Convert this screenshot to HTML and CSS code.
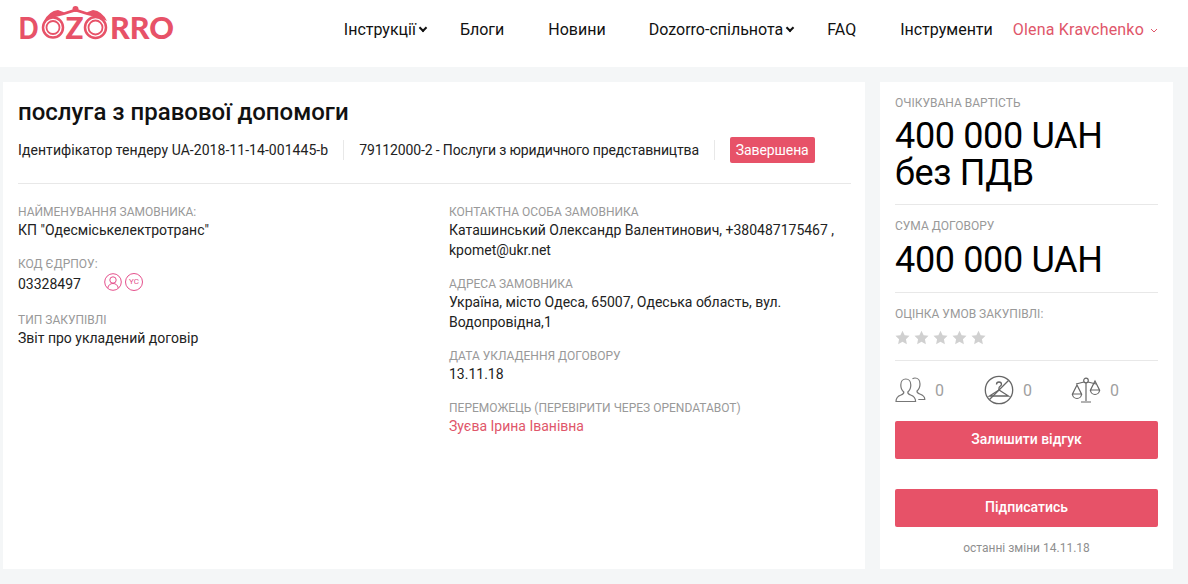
FILE: index.html
```html
<!DOCTYPE html>
<html lang="uk">
<head>
<meta charset="utf-8">
<title>Dozorro</title>
<link rel="stylesheet" href="styles.css">
</head>
<body>
<header class="header">
  <a class="logo" href="#" aria-label="Dozorro">
    <svg width="156" height="46" viewBox="0 -3 156 46">
      <g fill="#e75268" font-family="Lato, sans-serif" font-weight="900" font-size="31">
        <text x="-1.500" y="30.500" textLength="20" lengthAdjust="spacingAndGlyphs">D</text>
        <text x="45.500" y="30.500" textLength="18" lengthAdjust="spacingAndGlyphs">Z</text>
        <text x="90" y="30.500" textLength="64" lengthAdjust="spacingAndGlyphs">RRO</text>
      </g>
      <path d="M24 13Q29 3 38 2L44 4.200 55.500 .5 67 4.200 73 2Q82 3 87 13L80 10 67 7 55.500 3.500 44 7 31 10Z" fill="#e75268"/>
      <g fill="#fff" stroke="#e75268">
        <circle cx="33" cy="19.500" r="10" stroke-width="2.500"/>
        <circle cx="33" cy="19.500" r="6.500" stroke-width="1.800"/>
        <circle cx="75.500" cy="19.500" r="10.500" stroke-width="2.500"/>
        <circle cx="75.500" cy="19.500" r="7" stroke-width="1.800"/>
      </g>
      <circle cx="55.500" cy="1" r="3" fill="#e75268"/>
    </svg>
  </a>
  <nav class="nav">
    <a class="nav-link has-caret" href="#">Інструкції</a>
    <a class="nav-link" href="#">Блоги</a>
    <a class="nav-link" href="#">Новини</a>
    <a class="nav-link has-caret" href="#">Dozorro-спільнота</a>
    <a class="nav-link" href="#">FAQ</a>
    <a class="nav-link" href="#">Інструменти</a>
    <a class="user" href="#">Olena Kravchenko
      <svg class="user-caret" width="8" height="5" viewBox="0 0 8 5"><path d="M1 1l3 3 3-3" fill="none" stroke="#e0566a"/></svg>
    </a>
  </nav>
</header>

<main class="page">
  <section class="card main-card">
    <h1 class="title">послуга з правової допомоги</h1>
    <div class="meta">
      <span class="meta-item meta-id">Ідентифікатор тендеру UA-2018-11-14-001445-b</span>
      <span class="meta-item meta-cpv">79112000-2 - Послуги з юридичного представництва</span>
      <span class="meta-item meta-status"><span class="status">Завершена</span></span>
    </div>
    <div class="columns">
      <div class="col col-left">
        <div class="field">
          <div class="label">Найменування замовника:</div>
          <div class="value">КП "Одесміськелектротранс"</div>
        </div>
        <div class="field">
          <div class="label">Код ЄДРПОУ:</div>
          <div class="value code-row">
            <span>03328497</span>
            <span class="badges">
              <svg width="18" height="18" viewBox="0 0 18 18" fill="none" stroke="#e5508c">
                <circle cx="9" cy="9" r="8.300"/>
                <circle cx="9" cy="7" r="3.200"/>
                <path d="M3.800 15c.5-3 2.500-4.500 5.200-4.500s4.700 1.500 5.200 4.500"/>
              </svg>
              <span class="badge-yc">YC</span>
            </span>
          </div>
        </div>
        <div class="field">
          <div class="label">Тип закупівлі</div>
          <div class="value">Звіт про укладений договір</div>
        </div>
      </div>
      <div class="col col-right">
        <div class="field">
          <div class="label">Контактна особа замовника</div>
          <div class="value">Каташинський Олександр Валентинович, +380487175467 , kpomet@ukr.net</div>
        </div>
        <div class="field">
          <div class="label">Адреса замовника</div>
          <div class="value">Україна, місто Одеса, 65007, Одеська область, вул. Водопровідна,1</div>
        </div>
        <div class="field">
          <div class="label">Дата укладення договору</div>
          <div class="value">13.11.18</div>
        </div>
        <div class="field">
          <div class="label">Переможець (перевірити через opendatabot)</div>
          <div class="value"><a class="winner" href="#">Зуєва Ірина Іванівна</a></div>
        </div>
      </div>
    </div>
  </section>

  <aside class="card side-card">
    <div class="side-block block-expected">
      <div class="label">Очікувана вартість</div>
      <div class="price">400 000 UAH<br>без ПДВ</div>
    </div>
    <div class="side-block block-sum">
      <div class="label">Сума договору</div>
      <div class="price">400 000 UAH</div>
    </div>
    <div class="side-block block-rating">
      <div class="label">Оцінка умов закупівлі:</div>
      <div class="stars" aria-hidden="true">
        <svg width="15" height="15" viewBox="0 0 24 24"><path d="M12 1l3.400 7.300 7.900 1-5.800 5.500 1.500 7.900-7-3.900-7 3.900 1.500-7.900L.7 9.300l7.900-1z"/></svg>
        <svg width="15" height="15" viewBox="0 0 24 24"><path d="M12 1l3.400 7.300 7.900 1-5.800 5.500 1.500 7.900-7-3.900-7 3.900 1.500-7.900L.7 9.300l7.900-1z"/></svg>
        <svg width="15" height="15" viewBox="0 0 24 24"><path d="M12 1l3.400 7.300 7.900 1-5.800 5.500 1.500 7.900-7-3.900-7 3.900 1.500-7.900L.7 9.300l7.900-1z"/></svg>
        <svg width="15" height="15" viewBox="0 0 24 24"><path d="M12 1l3.400 7.300 7.900 1-5.800 5.500 1.500 7.900-7-3.900-7 3.900 1.500-7.900L.7 9.300l7.900-1z"/></svg>
        <svg width="15" height="15" viewBox="0 0 24 24"><path d="M12 1l3.400 7.300 7.900 1-5.800 5.500 1.500 7.900-7-3.900-7 3.900 1.500-7.900L.7 9.300l7.900-1z"/></svg>
      </div>
    </div>
    <div class="stats">
      <div class="stat stat-users">
        <svg width="31" height="26" viewBox="0 0 31 26" fill="none" stroke="#777" stroke-width="1.200">
          <path d="M1 24.500c0-4 2-5.500 5-6.500 2-.7 3-1.500 2.800-3-2-1.500-3-4-3-7 0-3.500 2-6 5-6s5 2.500 5 6c0 3-1 5.500-3 7-.2 1.500.8 2.300 2.800 3 3 1 5 2.500 5 6.500z"/>
          <path d="M17.500 1.800c.8-.5 1.600-.8 2.500-.8 3 0 5 2.500 5 6 0 3-1 5.500-3 7-.2 1.500.8 2.300 2.800 3 3 1 5 2.500 5 5.500h-6.500"/>
        </svg>
        <span>0</span>
      </div>
      <div class="stat stat-hanger">
        <svg width="30" height="30" viewBox="0 0 30 30" fill="none" stroke="#666" stroke-width="1.300">
          <circle cx="15" cy="15" r="13.700"/>
          <path d="M5.500 24.500L24.500 5.500"/>
          <path d="M5.500 21l9.500-6 9.500 6z"/>
          <path d="M12.500 9.500c0-1.400 1.100-2.500 2.500-2.500s2.500 1.100 2.500 2.500-2.500 1.500-2.500 3.500v2"/>
        </svg>
        <span>0</span>
      </div>
      <div class="stat stat-scales">
        <svg width="30" height="27" viewBox="0 0 30 27" fill="none" stroke="#666" stroke-width="1.200">
          <circle cx="15" cy="3.500" r="2.300"/>
          <path d="M15 6v18M10 25h10M5 7l8-2M17 5l8 2"/>
          <path d="M6 8l-4.500 9h9zM24 4l-4.500 9h9z"/>
          <path d="M1.500 17a4.500 4.500 0 0 0 9 0M19.500 13a4.500 4.500 0 0 0 9 0"/>
        </svg>
        <span>0</span>
      </div>
    </div>
    <a class="btn btn-review" href="#">Залишити відгук</a>
    <a class="btn btn-subscribe" href="#">Підписатись</a>
    <div class="changes">останні зміни 14.11.18</div>
  </aside>
</main>
</body>
</html>
```
FILE: styles.css
```css
* { box-sizing: border-box; }
html, body { margin: 0; padding: 0; }
body {
  background: #f4f6f7;
  font-family: Roboto, "Liberation Sans", sans-serif;
  color: #111;
  height: 584px;
  overflow: hidden;
}
a { text-decoration: none; color: inherit; }

.header {
  height: 67px;
  background: #fff;
  display: flex;
  align-items: flex-start;
  justify-content: space-between;
}
.logo { display: block; margin: 5px 0 0 20px; }
.logo svg { display: block; }
.nav {
  display: flex;
  align-items: center;
  height: 58px;
  font-size: 16px;
  padding-right: 30px;
}
.nav-link { color: #111; margin-right: 44px; white-space: nowrap; }
.nav-link.has-caret { position: relative; margin-right: 40px; padding-right: 4px; }
.nav-link.has-caret::after {
  content: "";
  position: absolute;
  right: -6px;
  top: 5px;
  width: 4px;
  height: 4px;
  border-right: 2px solid #111;
  border-bottom: 2px solid #111;
  transform: rotate(45deg);
}
.nav-link:nth-child(3) { margin-right: 43px; }
.nav-link:nth-child(5) { margin-right: 44px; }
.nav-link:nth-child(6) { margin-right: 20px; }
.user {
  color: #e0566a;
  display: flex;
  align-items: center;
  gap: 6px;
  white-space: nowrap;
  letter-spacing: .2px;
}
.user-caret { margin-top: 2px; }

.page {
  display: flex;
  gap: 15px;
  padding: 15px 15px 0 3px;
  height: 502px;
}
.card { background: #fff; }
.main-card {
  width: 862px;
  padding: 15px 14px 0 15px;
}
.title {
  margin: 0;
  font-size: 24px;
  line-height: 30px;
  font-weight: 500;
  color: #111;
}
.meta {
  display: flex;
  align-items: center;
  margin-top: 10px;
  padding-bottom: 20px;
  border-bottom: 1px solid #e8e8e8;
  font-size: 14px;
  color: #222;
}
.meta-item {
  display: flex;
  align-items: center;
  height: 20px;
  padding-right: 15px;
  margin-right: 15px;
  border-right: 1px solid #e8e8e8;
}
.meta-id { letter-spacing: .05px; }
.meta-cpv { letter-spacing: -.14px; }
.meta-status { height: 26px; border-right: 0; }
.status {
  background: #e75268;
  color: #fff;
  border-radius: 2px;
  padding: 0 6px;
  height: 26px;
  line-height: 26px;
  letter-spacing: -.1px;
}
.columns { display: flex; padding-top: 20px; }
.col-left { width: 431px; }
.col-right { width: 390px; }
.field { margin-bottom: 16px; }
.label {
  font-size: 12px;
  line-height: 16px;
  color: #999;
  text-transform: uppercase;
}
.value {
  font-size: 14px;
  line-height: 20px;
  color: #222;
}
.code-row { display: flex; align-items: center; height: 24px; }
.field:nth-child(2) .code-row { margin-bottom: 6px; }
.badges { display: flex; align-items: center; gap: 3px; margin-left: 23px; margin-top: -5px; }
.badge-yc {
  width: 18px;
  height: 18px;
  border: 1px solid #e5508c;
  border-radius: 50%;
  color: #e5508c;
  font-size: 8px;
  line-height: 16px;
  text-align: center;
}
.winner { color: #e0566a; }

.side-card {
  width: 293px;
  padding: 13px 15px 0;
  display: flex;
  flex-direction: column;
}
.side-block { border-bottom: 1px solid #e8e8e8; }
.price {
  font-size: 36px;
  line-height: 37px;
  color: #000;
  letter-spacing: -.35px;
  margin-top: 7px;
}
.block-expected { padding-bottom: 12px; }
.block-sum { padding-top: 13px; padding-bottom: 13px; }
.block-sum .price { margin-top: 8px; }
.block-rating { padding-top: 13px; padding-bottom: 15px; }
.stars { display: flex; gap: 4px; margin-top: 8px; }
.stars svg { fill: #d0d0d0; display: block; }
.stats {
  display: flex;
  align-items: center;
  height: 60px;
  padding-bottom: 2px;
  color: #a0a0a0;
  font-size: 16px;
}
.stat { display: flex; align-items: center; gap: 9px; }
.stat-users { width: 89px; }
.stat-hanger { width: 87px; }
.btn {
  display: block;
  height: 38px;
  line-height: 37px;
  background: #e75268;
  color: #fff;
  text-align: center;
  font-size: 14px;
  font-weight: 500;
  border-radius: 2px;
}
.btn-subscribe { margin-top: 30px; }
.changes {
  margin-top: 13px;
  text-align: center;
  font-size: 12px;
  line-height: 16px;
  color: #8f8f8f;
}
```
